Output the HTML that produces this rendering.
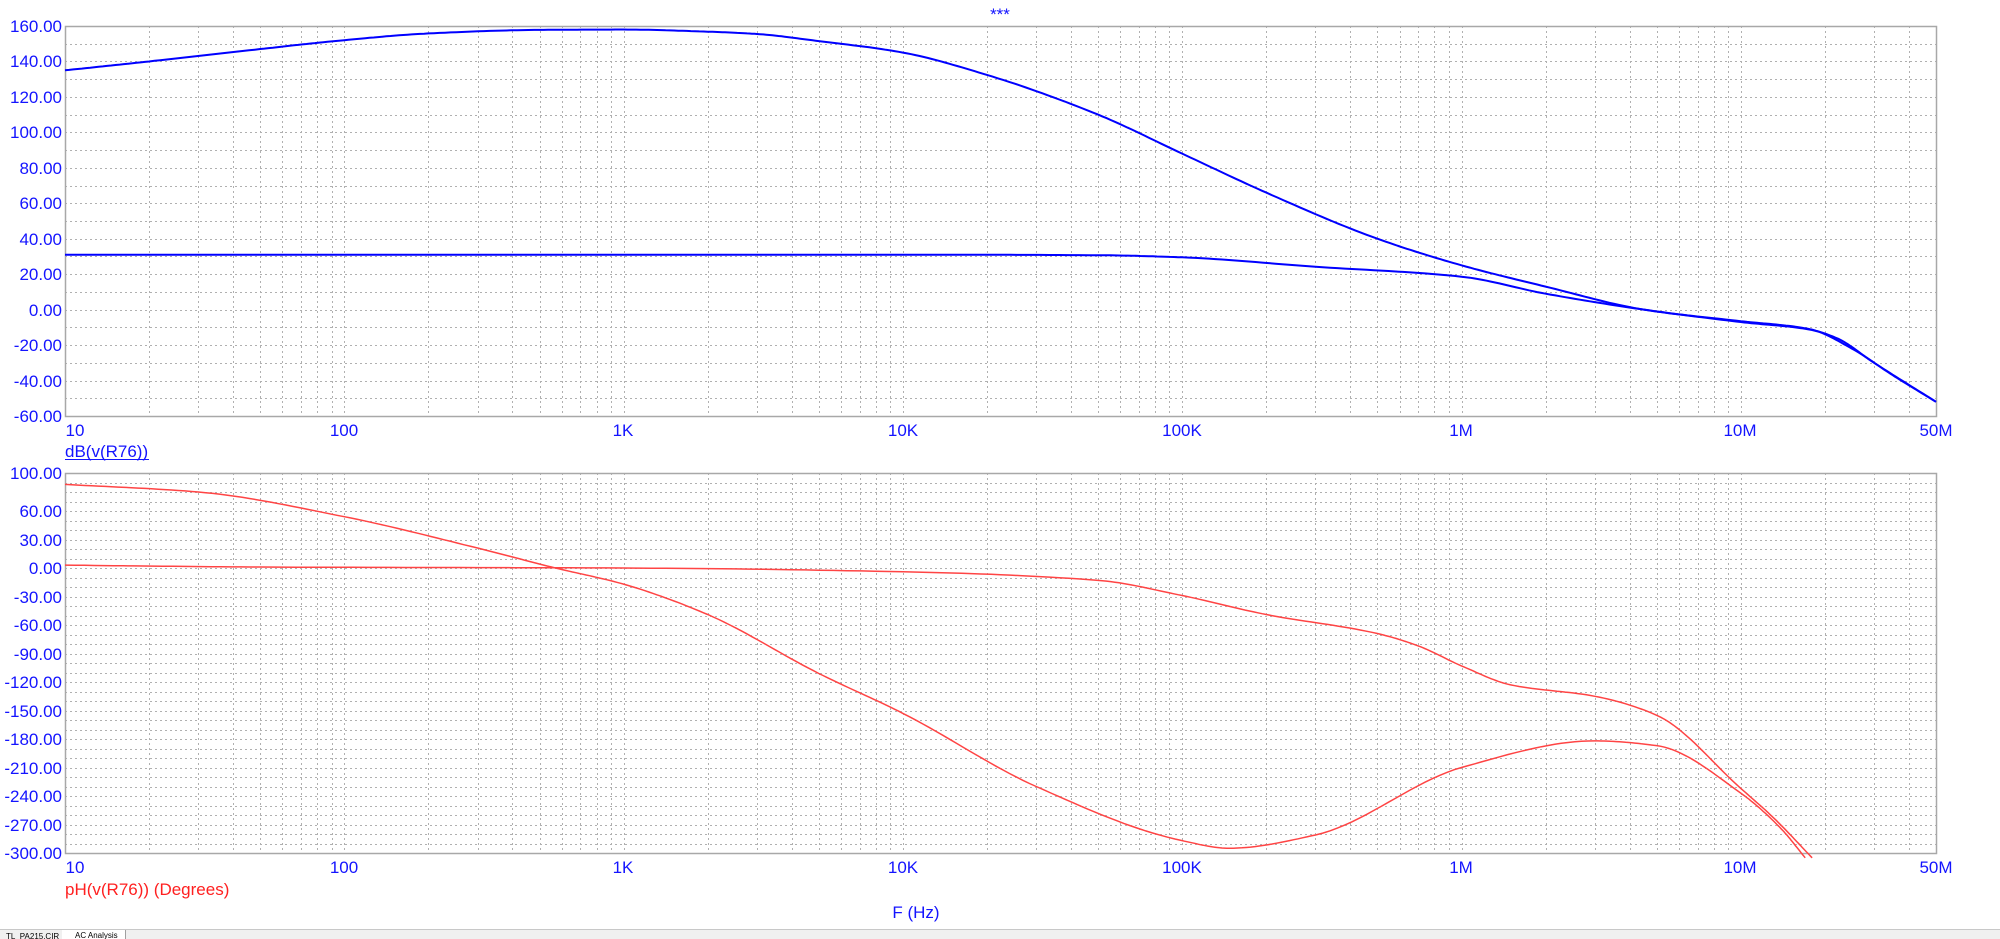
<!DOCTYPE html>
<html><head><meta charset="utf-8"><style>
html,body{margin:0;padding:0;background:#fff;width:2000px;height:939px;overflow:hidden}
svg{position:absolute;left:0;top:0}
text{font-family:"Liberation Sans",sans-serif}
</style></head><body>
<svg id="s" width="2000" height="939" xmlns="http://www.w3.org/2000/svg">
<g id="grid"></g>
<g id="curves" fill="none"></g>
<g font-size="17" fill="#1414ff" text-anchor="end">
<text x="62" y="32">160.00</text><text x="62" y="67">140.00</text><text x="62" y="103">120.00</text>
<text x="62" y="138">100.00</text><text x="62" y="174">80.00</text><text x="62" y="209">60.00</text>
<text x="62" y="245">40.00</text><text x="62" y="280">20.00</text><text x="62" y="316">0.00</text>
<text x="62" y="351">-20.00</text><text x="62" y="387">-40.00</text><text x="62" y="422">-60.00</text>
<text x="62" y="479">100.00</text><text x="62" y="517">60.00</text><text x="62" y="546">30.00</text>
<text x="62" y="574">0.00</text><text x="62" y="603">-30.00</text><text x="62" y="631">-60.00</text>
<text x="62" y="660">-90.00</text><text x="62" y="688">-120.00</text><text x="62" y="717">-150.00</text>
<text x="62" y="745">-180.00</text><text x="62" y="774">-210.00</text><text x="62" y="802">-240.00</text>
<text x="62" y="831">-270.00</text><text x="62" y="859">-300.00</text>
</g>
<g font-size="17" fill="#1414ff" text-anchor="middle">
<text x="75" y="436">10</text><text x="344" y="436">100</text><text x="623" y="436">1K</text>
<text x="903" y="436">10K</text><text x="1182" y="436">100K</text><text x="1461" y="436">1M</text>
<text x="1740" y="436">10M</text><text x="1936" y="436">50M</text>
<text x="75" y="873">10</text><text x="344" y="873">100</text><text x="623" y="873">1K</text>
<text x="903" y="873">10K</text><text x="1182" y="873">100K</text><text x="1461" y="873">1M</text>
<text x="1740" y="873">10M</text><text x="1936" y="873">50M</text>
<text x="1000" y="20">***</text>
<text x="916" y="918">F (Hz)</text>
</g>
<text x="65" y="457" font-size="17" fill="#1414ff">dB(v(R76))</text>
<line x1="65" y1="459.5" x2="149" y2="459.5" stroke="#1414ff" stroke-width="1"/>
<text x="65" y="895" font-size="17" fill="#ff2020">pH(v(R76)) (Degrees)</text>
<rect x="0" y="929" width="2000" height="10" fill="#f0f0f0"/>
<line x1="0" y1="929.5" x2="2000" y2="929.5" stroke="#c8c8c8"/>
<rect x="62" y="930" width="63" height="9" fill="#fff"/>
<line x1="125.5" y1="930" x2="125.5" y2="939" stroke="#a0a0a0"/>
<text x="6" y="939" font-size="8" fill="#000">TL_PA215.CIR</text>
<text x="75" y="938" font-size="8" fill="#000">AC Analysis</text>
</svg>
<script>
var NS="http://www.w3.org/2000/svg";
var L=65,R=1936,DW=279.3;
function X(f){return L+(Math.log10(f)-1)*DW;}
var g=document.getElementById('grid'),c=document.getElementById('curves');
function ln(x1,y1,x2,y2,st,dash){var e=document.createElementNS(NS,'line');e.setAttribute('x1',x1);e.setAttribute('y1',y1);e.setAttribute('x2',x2);e.setAttribute('y2',y2);e.setAttribute('stroke',st);if(dash)e.setAttribute('stroke-dasharray',dash);g.appendChild(e);}
function panel(T,B,ys){
 for(var d=1;d<=7;d++)for(var m=1;m<=9;m++){var f=m*Math.pow(10,d);if(f<=10||f>=5e7)continue;var x=Math.round(X(f))+0.5;ln(x,T,x,B,'#b0b0b0','2,3');}
 ys.forEach(function(y){y=Math.round(y)+0.5;ln(L,y,R,y,'#b0b0b0','2,3');});
 var r=document.createElementNS(NS,'rect');r.setAttribute('x',L+0.5);r.setAttribute('y',T+0.5);r.setAttribute('width',R-L);r.setAttribute('height',B-T);r.setAttribute('fill','none');r.setAttribute('stroke','#a8a8a8');r.setAttribute('stroke-width','1.5');g.appendChild(r);
}
function YM(v){return 26+(160-v)*390/220;}
function YP(v){return 473+(100-v)*0.95;}
var ym=[];for(var v=150;v>-60;v-=10)ym.push(YM(v));
panel(26,416,ym);
var yp=[];for(var v=90;v>-300;v-=10)yp.push(YP(v));
panel(473,853,yp);
function curve(pts,Y,col,w){
 var n=pts.length,xs=[],ys=[],i;
 for(i=0;i<n;i++){xs.push(X(pts[i][0]));ys.push(pts[i][1]);}
 var dl=[],m=[];
 for(i=0;i<n-1;i++)dl.push((ys[i+1]-ys[i])/(xs[i+1]-xs[i]));
 m[0]=dl[0];m[n-1]=dl[n-2];
 for(i=1;i<n-1;i++){if(dl[i-1]*dl[i]<=0)m[i]=0;else{var w1=2*(xs[i+1]-xs[i])+(xs[i]-xs[i-1]),w2=(xs[i+1]-xs[i])+2*(xs[i]-xs[i-1]);m[i]=(w1+w2)/(w1/dl[i-1]+w2/dl[i]);}}
 var d='M'+xs[0].toFixed(1)+','+Y(ys[0]).toFixed(1);
 for(i=0;i<n-1;i++){var h=xs[i+1]-xs[i];
  for(var k=1;k<=20;k++){var t=k/20,t2=t*t,t3=t2*t;
   var v=(2*t3-3*t2+1)*ys[i]+(t3-2*t2+t)*h*m[i]+(-2*t3+3*t2)*ys[i+1]+(t3-t2)*h*m[i+1];
   d+=' L'+(xs[i]+t*h).toFixed(1)+','+Y(v).toFixed(1);}}
 var e=document.createElementNS(NS,'path');e.setAttribute('d',d);e.setAttribute('stroke',col);e.setAttribute('stroke-width',w);c.appendChild(e);
}
curve([[10,135],[20,140],[50,147],[100,152],[200,155.8],[500,157.8],[1e3,158],[2e3,156.8],[3e3,155.5],[5e3,151.5],[1e4,145],[2e4,132.4],[5e4,110],[1e5,88],[2e5,66],[5e5,40],[1e6,25],[2e6,13],[4.5e6,0],[1e7,-6.5],[1.7e7,-10.5],[2.2e7,-16],[3e7,-30],[5e7,-52]],YM,'#0000ff',2);
curve([[10,31],[1e3,31],[1e4,31],[5e4,30.7],[1e5,29.5],[3e5,24.2],[1e6,18.6],[2e6,9],[4.5e6,0],[1e7,-7],[1.8e7,-11.5],[2.5e7,-22],[3.5e7,-37],[5e7,-52]],YM,'#0000ff',2);
curve([[10,88],[30,80],[100,54],[300,21],[570,0],[1e3,-17],[2e3,-49],[5e3,-111],[1e4,-153],[3e4,-230],[1e5,-287],[1.47e5,-295],[3e5,-281],[1e6,-210],[3e6,-182],[5e6,-187],[1e7,-237],[1.4e7,-275],[1.7e7,-305]],YP,'#ff4444',1.5);
curve([[10,3],[50,1],[1e3,0],[1e4,-4],[5e4,-13],[1e5,-29],[2e5,-49],[5e5,-69],[7e5,-82],[1e6,-103],[1.5e6,-123],[3e6,-135],[5e6,-155],[1e7,-232],[1.3e7,-262],[1.8e7,-305]],YP,'#ff4444',1.5);
</script>
</body></html>
